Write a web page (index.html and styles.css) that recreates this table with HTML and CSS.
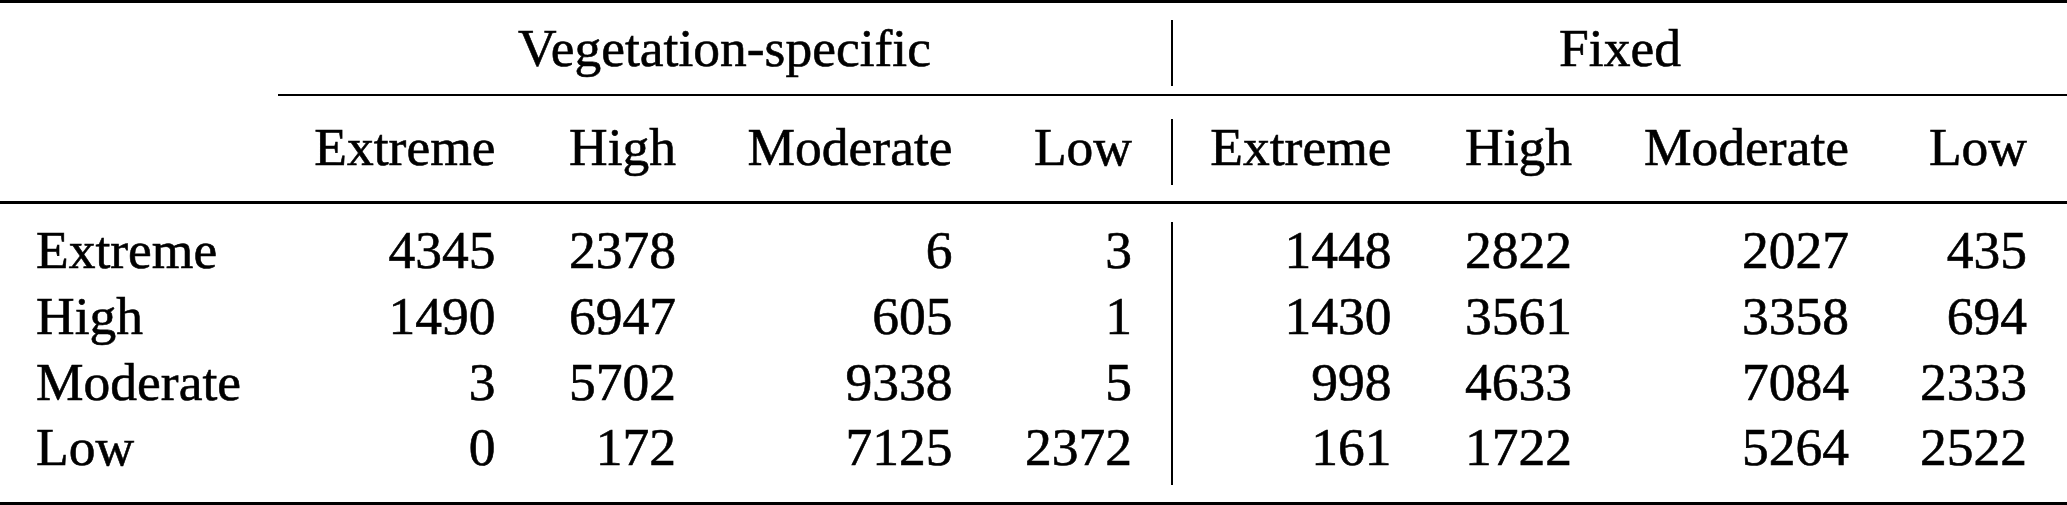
FILE: index.html
```html
<!DOCTYPE html>
<html lang="en">
<head>
<meta charset="utf-8">
<title>Vegetation-specific vs Fixed</title>
<link rel="stylesheet" href="styles.css">
</head>
<body>
<div class="table">
  <div class="rule rule-top"></div>
  <div class="row">
    <div class="cell"></div>
    <div class="cell span-a">Vegetation-specific</div>
    <div class="cell span-b sep">Fixed</div>
  </div>
  <div class="cmid"></div>
  <div class="row">
    <div class="cell"></div>
    <div class="cell">Extreme</div>
    <div class="cell">High</div>
    <div class="cell">Moderate</div>
    <div class="cell c4">Low</div>
    <div class="cell sep">Extreme</div>
    <div class="cell">High</div>
    <div class="cell">Moderate</div>
    <div class="cell c8">Low</div>
  </div>
  <div class="rule rule-mid"></div>
  <div class="row body">
    <div class="cell lbl">Extreme</div>
    <div class="cell">4345</div>
    <div class="cell">2378</div>
    <div class="cell">6</div>
    <div class="cell c4">3</div>
    <div class="cell sep">1448</div>
    <div class="cell">2822</div>
    <div class="cell">2027</div>
    <div class="cell c8">435</div>

    <div class="cell lbl">High</div>
    <div class="cell">1490</div>
    <div class="cell">6947</div>
    <div class="cell">605</div>
    <div class="cell c4">1</div>
    <div class="cell sep">1430</div>
    <div class="cell">3561</div>
    <div class="cell">3358</div>
    <div class="cell c8">694</div>

    <div class="cell lbl">Moderate</div>
    <div class="cell">3</div>
    <div class="cell">5702</div>
    <div class="cell">9338</div>
    <div class="cell c4">5</div>
    <div class="cell sep">998</div>
    <div class="cell">4633</div>
    <div class="cell">7084</div>
    <div class="cell c8">2333</div>

    <div class="cell lbl">Low</div>
    <div class="cell">0</div>
    <div class="cell">172</div>
    <div class="cell">7125</div>
    <div class="cell c4">2372</div>
    <div class="cell sep">161</div>
    <div class="cell">1722</div>
    <div class="cell">5264</div>
    <div class="cell c8">2522</div>
  </div>
  <div class="rule rule-bottom"></div>
</div>
</body>
</html>
```

FILE: styles.css
```css
html, body {
  margin: 0;
  padding: 0;
  background: #ffffff;
}

body {
  width: 2067px;
  height: 505px;
  overflow: hidden;
  font-family: "Liberation Serif", serif;
  font-size: 53.5px;
  color: #000000;
}

.table {
  display: flex;
  flex-direction: column;
  width: 2067px;
}

.rule {
  background: #000000;
}

.rule-top {
  height: 3px;
  margin-bottom: 17px;
}

.rule-mid {
  height: 3px;
  margin-top: 16px;
  margin-bottom: 18px;
}

.rule-bottom {
  height: 3px;
  margin-top: 17px;
}

.cmid {
  height: 2px;
  background: #000000;
  margin: 8px 0 23px 278px;
}

.row {
  display: grid;
  grid-template-columns: 278px 254px 180.5px 276.5px 182px 257px 180.5px 277px 181.5px;
  grid-auto-rows: 66px;
  line-height: 57px;
}

.body {
  grid-auto-rows: 65.75px;
}

.cell {
  box-sizing: border-box;
  padding: 0 36.5px 0 0;
  text-align: right;
  white-space: nowrap;
  -webkit-text-stroke: 0.6px #000000;
}

.c4 {
  padding-right: 39px;
}

.c8 {
  padding-right: 40px;
}

.lbl {
  text-align: left;
  padding: 0 0 0 36px;
}

.sep {
  border-left: 2px solid #000000;
}

.span-a {
  grid-column: 2 / 6;
  text-align: center;
  padding: 0;
}

.span-b {
  grid-column: 6 / 10;
  text-align: center;
  padding: 0;
}
```
